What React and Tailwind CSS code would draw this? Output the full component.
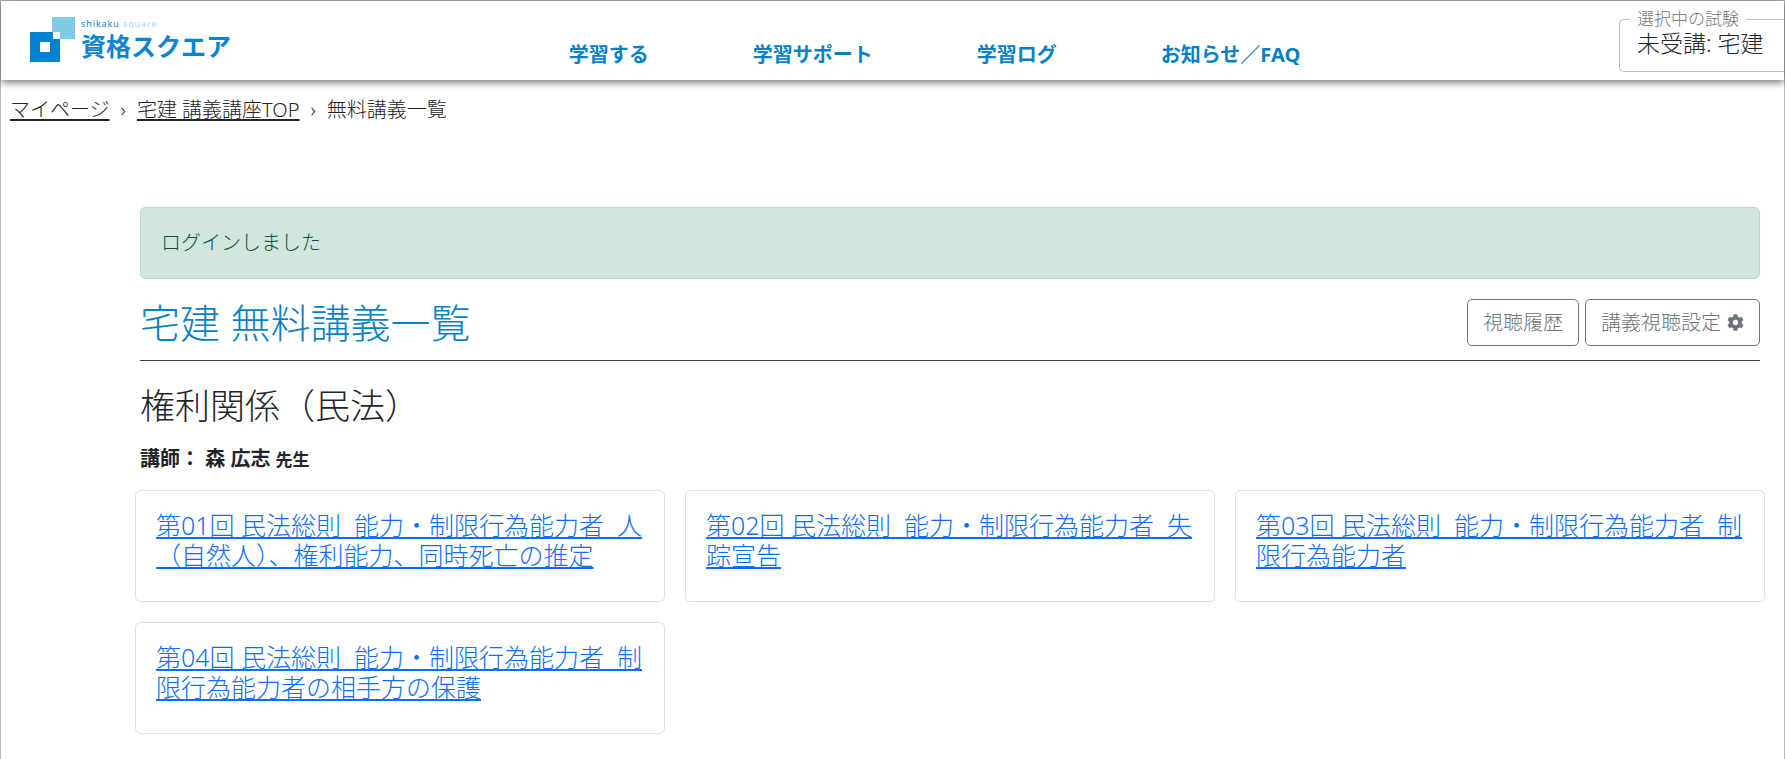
import { FaCog } from "react-icons/fa";

const NAV_ITEMS = ["学習する", "学習サポート", "学習ログ", "お知らせ／FAQ"];

const LECTURES = [
  "第01回 民法総則\u00a0 能力・制限行為能力者\u00a0 人（自然人）、権利能力、同時死亡の推定",
  "第02回 民法総則\u00a0 能力・制限行為能力者\u00a0 失踪宣告",
  "第03回 民法総則\u00a0 能力・制限行為能力者\u00a0 制限行為能力者",
  "第04回 民法総則\u00a0 能力・制限行為能力者\u00a0 制限行為能力者の相手方の保護",
];

function Logo() {
  return (
    <a href="#" className="flex w-[220px] gap-[6px] text-[#0a84d0]">
      <svg width="45" height="45" viewBox="0 0 45 45" aria-hidden="true">
        <path fill="#7ecbe8" d="M22 0h23v22H30v-7h-8z" />
        <path fill="#0082d4" fillRule="evenodd" d="M0 15h23v7h7v23H0zM10 25v10h10V25z" />
      </svg>
      <span className="flex flex-col">
        <span className="text-[9px] leading-[13px] font-normal tracking-widest">
          shikaku <span className="text-[#a5d8ee]">square</span>
        </span>
        <span className="text-[25px] leading-[32px] font-bold">資格スクエア</span>
      </span>
    </a>
  );
}

function ExamSelect() {
  return (
    <fieldset className="h-[63px] w-[165px] rounded-l-[5px] border border-r-0 border-[#bdbdbd] pl-[10px]">
      <legend className="px-[7px] text-[17px] leading-[20px] text-[#757575]">
        <label htmlFor="exam">選択中の試験</label>
      </legend>
      <select id="exam" className="block appearance-none pl-[7px] text-[23px] leading-[28px] font-light text-[#212529]">
        <option>未受講: 宅建</option>
      </select>
    </fieldset>
  );
}

function Header() {
  return (
    <header className="flex h-[79px] items-start justify-between bg-white pl-[29px] shadow-[0_2px_8px_rgba(0,0,0,0.6)]">
      <div className="pt-[16px]">
        <Logo />
      </div>
      <nav className="flex gap-[104px] pt-[39px] text-[20px] leading-[30px] font-bold text-[#0a7fc4]">
        {NAV_ITEMS.map((item) => (
          <a key={item} href="#">{item}</a>
        ))}
      </nav>
      <div className="pt-[8px]">
        <ExamSelect />
      </div>
    </header>
  );
}

function Breadcrumb() {
  return (
    <nav aria-label="breadcrumb" className="flex gap-[11px] px-[9px] pt-[15px] leading-[30px]">
      <a href="#" className="underline underline-offset-2">マイページ</a>
      <span>›</span>
      <a href="#" className="underline underline-offset-2">宅建 講義講座TOP</a>
      <span>›</span>
      <span>無料講義一覧</span>
    </nav>
  );
}

function LectureCard({ title }) {
  return (
    <li className="min-h-[112px] rounded-[5px] border border-[#dfdfdf] px-5 pt-[19px] pb-5">
      <a href="#" className="block text-[25px] leading-[30px] text-[#0d6efd] underline decoration-2 underline-offset-2">
        {title}
      </a>
    </li>
  );
}

export default function App() {
  return (
    <div className="min-h-screen border border-[#b8b8b8] bg-white font-['Noto_Sans','Noto_Sans_CJK_JP',sans-serif] text-[20px] font-light text-[#212529]">
      <Header />
      <Breadcrumb />

      <main className="pt-[82px] pr-[24px] pb-[25px] pl-[139px]">
        <div role="alert" className="rounded-[5px] border border-[#badbcc] bg-[#d1e7dd] p-5 leading-[30px] text-[#0f5132]">
          ログインしました
        </div>

        <div className="mt-5 flex items-start justify-between border-b border-[#3f4347] pb-[14px]">
          <h1 className="text-[40px] leading-[47px] text-[#0a7fc4]">宅建 無料講義一覧</h1>
          <div className="flex gap-[6px] text-[#6c757d]">
            <button type="button" className="h-[47px] rounded-[5px] border border-[#6c757d] px-[15px]">
              視聴履歴
            </button>
            <button type="button" className="flex h-[47px] items-center gap-[6px] rounded-[5px] border border-[#6c757d] px-[15px]">
              講義視聴設定
              <FaCog size={17} />
            </button>
          </div>
        </div>

        <h2 className="mt-[24px] text-[35px] leading-[42px]">権利関係（民法）</h2>
        <p className="mt-[17px] leading-[30px] font-bold">
          講師： 森 広志 <span className="text-[17px]">先生</span>
        </p>

        <ul className="-mx-[5px] mt-[15px] grid grid-cols-3 gap-5">
          {LECTURES.map((title) => (
            <LectureCard key={title} title={title} />
          ))}
        </ul>
      </main>
    </div>
  );
}
